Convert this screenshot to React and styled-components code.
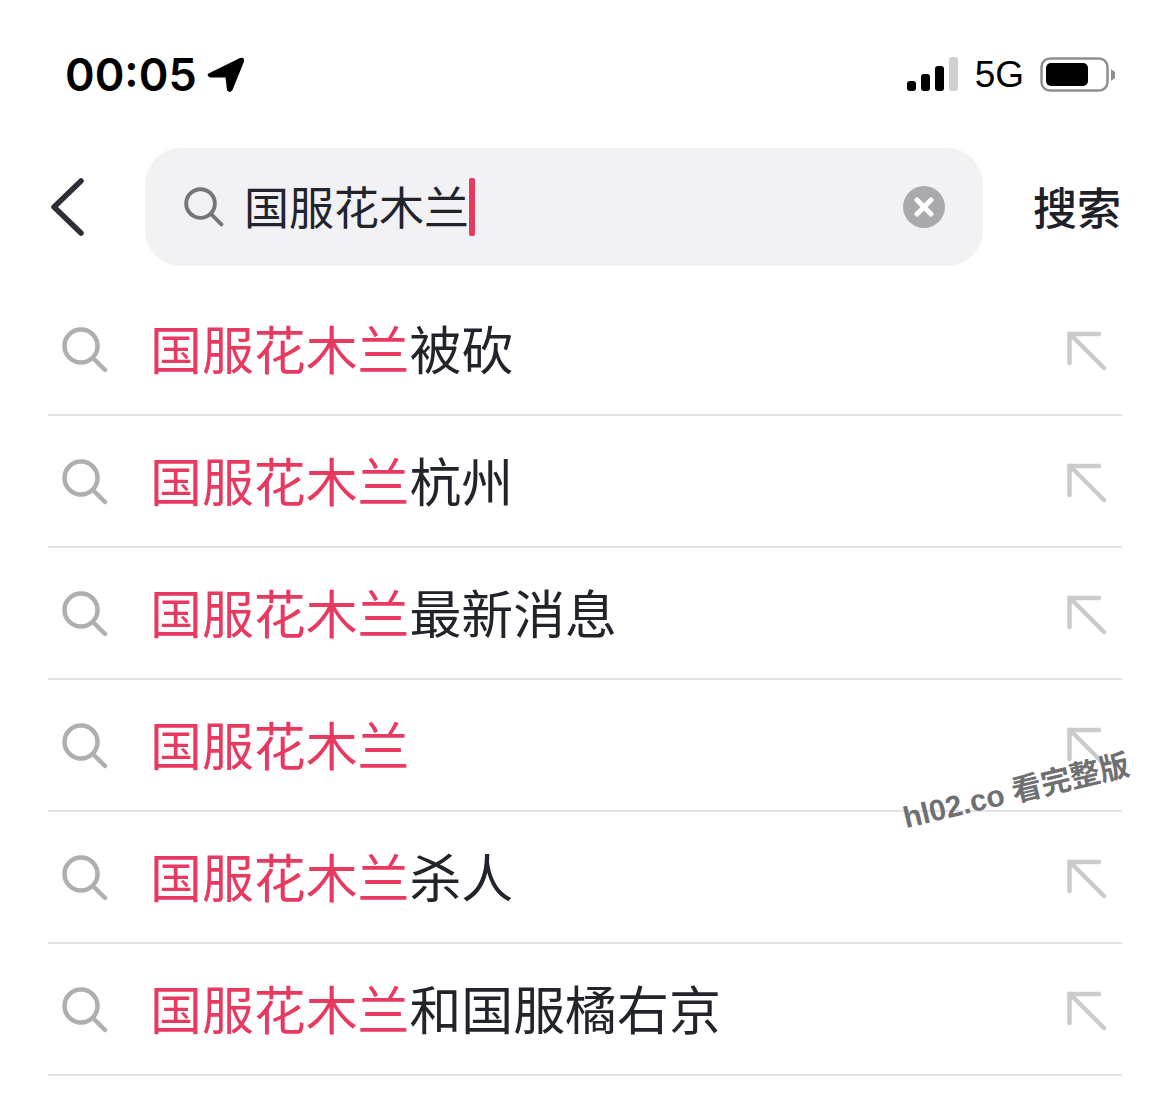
import React from "react";
import styled, { createGlobalStyle } from "styled-components";

const CJK = `"Noto Sans CJK SC", "Noto Sans", sans-serif`;

const Global = createGlobalStyle`
  html, body { margin: 0; padding: 0; background: #fff; }
  body { width: 1170px; height: 1095px; overflow: hidden; font-family: ${CJK}; }
`;

const Page = styled.div`
  position: relative;
  width: 1170px;
  height: 1095px;
  overflow: hidden;
  background: #fff;
`;

const StatusBar = styled.div`
  display: flex;
  align-items: center;
  justify-content: space-between;
  height: 148px;
  padding: 2px 54px 0 65px;
  box-sizing: border-box;
`;

const Cluster = styled.div`
  display: flex;
  align-items: center;
  gap: ${p => p.$gap}px;
`;

const Time = styled.span`
  font-family: Inter, sans-serif;
  font-size: 45px;
  font-weight: 600;
  line-height: 56px;
  color: #000;
`;

const Network = styled.span`
  font-family: "Liberation Sans", Arial, sans-serif;
  font-size: 37px;
  line-height: 44px;
  color: #000;
`;

const SearchRow = styled.div`
  display: flex;
  align-items: center;
  height: 118px;
  margin-bottom: 18px;
  padding: 0 50px 0 50px;
`;

const BackButton = styled.div`
  display: flex;
  width: 95px;
  flex: none;
`;

const SearchBox = styled.div`
  display: flex;
  align-items: center;
  width: 838px;
  height: 118px;
  flex: none;
  box-sizing: border-box;
  padding: 0 38px 0 39px;
  background: #f2f2f4;
  border-radius: 36px;
`;

const Query = styled.div`
  display: flex;
  align-items: center;
  flex: 1;
  margin-left: 20px;
  font-size: 45px;
  line-height: 60px;
  color: #22242c;
`;

const QueryText = styled.span`
  display: block;
  margin-top: -3px;
`;

const Caret = styled.span`
  display: block;
  width: 6px;
  height: 58px;
  background: #e83a60;
  border-radius: 2px;
`;

const SearchAction = styled.div`
  margin: -2px 0 0 50px;
  font-size: 44px;
  font-weight: 500;
  line-height: 60px;
  color: #1f2129;
  white-space: nowrap;
`;

const List = styled.div`
  display: flex;
  flex-direction: column;
  margin: 0 48px;
`;

const Row = styled.div`
  display: flex;
  align-items: center;
  height: 132px;
  box-sizing: border-box;
  border-bottom: 2px solid #e3e3e5;
  padding: 0 15px 0 14px;
`;

const Label = styled.div`
  flex: 1;
  margin: -2px 0 0 42px;
  font-size: 51.9px;
  line-height: 70px;
  color: #22242c;
  white-space: nowrap;
`;

const Match = styled.span`
  color: #e83a60;
`;

const Watermark = styled.div`
  position: absolute;
  left: 908px;
  top: 799px;
  font-family: "Liberation Sans", ${CJK};
  font-size: 30px;
  font-weight: 700;
  line-height: 38px;
  color: #707073;
  white-space: nowrap;
  transform: rotate(-13.5deg);
  transform-origin: left bottom;
`;

const SearchIcon = ({ size, color, width }) => (
  <svg width={size} height={size} viewBox="0 0 46 46" fill="none" style={{ flex: "none" }}>
    <circle cx="19" cy="19" r="16.5" stroke={color} strokeWidth={width} />
    <path d="M31 31 L43 43" stroke={color} strokeWidth={width} strokeLinecap="round" />
  </svg>
);

const RowIcon = styled.span`
  display: flex;
  flex: none;
  margin-top: ${p => p.$top}px;
`;

const Locate = () => (
  <svg width="38" height="36" viewBox="0 0 38 36">
    <path d="M1.5 16.5 L33 1 Q38 0 37 4.5 L25.5 33 Q22.5 37 20 33 L18.5 20.5 L3.5 20.5 Q-1 19 1.5 16.5 Z" fill="#000" />
  </svg>
);

const Signal = () => (
  <svg width="52" height="36" viewBox="0 0 52 36">
    <rect x="0" y="24" width="9" height="10" rx="3" fill="#000" />
    <rect x="14" y="17" width="9" height="17" rx="3" fill="#000" />
    <rect x="28" y="9" width="9" height="25" rx="3" fill="#000" />
    <rect x="42" y="0" width="9" height="34" rx="3" fill="#cfcfcf" />
  </svg>
);

const Battery = () => (
  <svg width="76" height="36" viewBox="0 0 76 36">
    <rect x="1.5" y="1.5" width="66" height="32" rx="8.5" fill="none" stroke="#8f8f8f" strokeWidth="2.5" />
    <rect x="6" y="6" width="42" height="23" rx="5" fill="#000" />
    <path d="M71 12 L75 15 L75 21 L71 24 Z" fill="#8f8f8f" />
  </svg>
);

const Back = () => (
  <svg width="36" height="60" viewBox="0 0 36 60" fill="none">
    <path d="M31 4 L4 30 L31 56" stroke="#2c2e39" strokeWidth="5.5" strokeLinecap="round" strokeLinejoin="round" />
  </svg>
);

const Clear = () => (
  <svg width="42" height="42" viewBox="0 0 42 42" style={{ flex: "none" }}>
    <circle cx="21" cy="21" r="21" fill="#aaaaae" />
    <path d="M14 14 L28 28 M28 14 L14 28" stroke="#fff" strokeWidth="5" strokeLinecap="round" />
  </svg>
);

const Fill = () => (
  <svg width="40" height="40" viewBox="0 0 40 40" fill="none" style={{ flex: "none" }}>
    <path d="M32 3 H2.5 V32 M3 3 L37 37" stroke="#cbcbcd" strokeWidth="4.5" strokeLinecap="round" />
  </svg>
);

const rows = ["被砍", "杭州", "最新消息", "", "杀人", "和国服橘右京"];

export default function App() {
  return (
    <Page>
      <Global />
      <StatusBar>
        <Cluster $gap={10}>
          <Time>00:05</Time>
          <Locate />
        </Cluster>
        <Cluster $gap={16}>
          <Signal />
          <Network>5G</Network>
          <Battery />
        </Cluster>
      </StatusBar>
      <SearchRow>
        <BackButton><Back /></BackButton>
        <SearchBox>
          <SearchIcon size={40} color="#75767b" width={4.5} />
          <Query><QueryText>国服花木兰</QueryText><Caret /></Query>
          <Clear />
        </SearchBox>
        <SearchAction>搜索</SearchAction>
      </SearchRow>
      <List>
        {rows.map((r, i) => (
          <Row key={i}>
            <RowIcon $top={2}><SearchIcon size={46} color="#afafb1" width={4.5} /></RowIcon>
            <Label><Match>国服花木兰</Match>{r}</Label>
            <RowIcon $top={4}><Fill /></RowIcon>
          </Row>
        ))}
      </List>
      <Watermark>hl02.co 看完整版</Watermark>
    </Page>
  );
}
